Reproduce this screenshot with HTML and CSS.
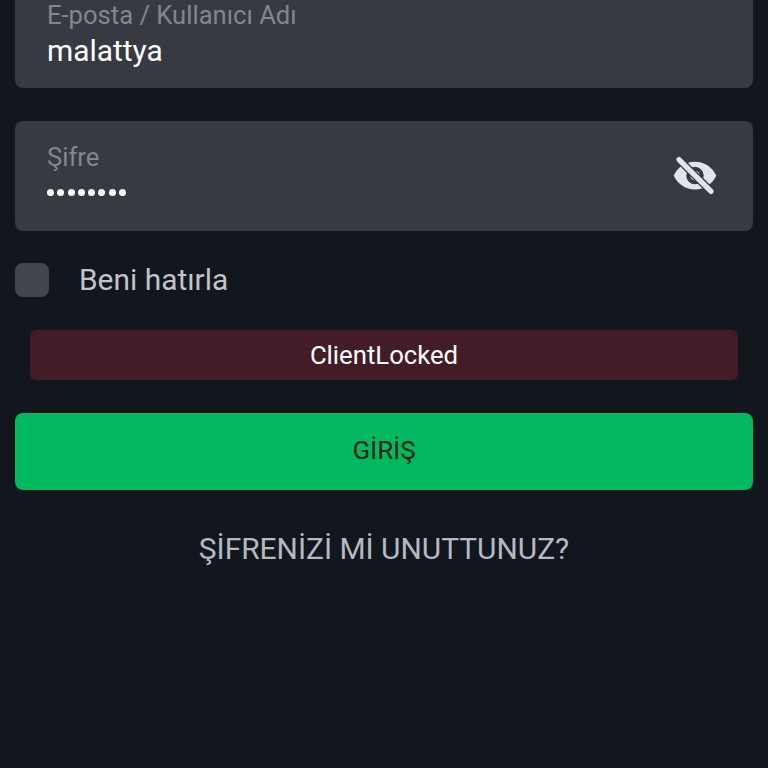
FILE: index.html
```html
<!DOCTYPE html>
<html lang="tr">
<head>
  <meta charset="UTF-8">
  <meta name="viewport" content="width=device-width, initial-scale=1.0">
  <title>Giriş</title>
  <link rel="stylesheet" href="styles.css">
</head>
<body>

<main class="login">
  <!-- Username field, scrolled partly out of view -->
  <div class="field field-user">
    <div class="field-text">
      <label class="field-label">E-posta / Kullanıcı Adı</label>
      <div class="field-value">malattya</div>
    </div>
  </div>

  <div class="field field-pass">
    <div class="field-text">
      <label class="field-label">Şifre</label>
      <div class="field-dots">
        <span></span><span></span><span></span><span></span><span></span><span></span><span></span><span></span>
      </div>
    </div>
    <svg class="eye" viewBox="0 0 24 24" width="50" height="50">
      <path fill="#e1e4e8" fill-rule="evenodd" d="M12 5.100c-4.600 0-8.500 2.700-10.200 6.700 1.700 4 5.600 6.700 10.200 6.700s8.500-2.700 10.200-6.700C20.500 7.800 16.600 5.100 12 5.100zm0 2.500a4.200 4.200 0 1 1 0 8.400 4.200 4.200 0 0 1 0-8.400z"/>
      <circle cx="12" cy="11.800" r="2.300" fill="#e1e4e8"/>
      <path stroke="#373a41" stroke-width="3.800" d="M4.300 4.100 19.700 19.400"/>
      <path stroke="#e1e4e8" stroke-width="2.500" stroke-linecap="round" d="M4.300 4.100 19.700 19.400"/>
    </svg>
  </div>

  <div class="remember">
    <span class="checkbox"></span>
    <span class="remember-text">Beni hatırla</span>
  </div>

  <div class="error">ClientLocked</div>

  <button class="submit">GİRİŞ</button>

  <a class="forgot">ŞİFRENİZİ Mİ UNUTTUNUZ?</a>
</main>

</body>
</html>
```

FILE: styles.css
```css
body {
  margin: 0;
  padding: 0;
  height: 768px;
  overflow: hidden;
  background: #12161d;
  font-family: 'Roboto', sans-serif;
}

.login {
  display: flex;
  flex-direction: column;
  padding: 0 15px;
}

.field {
  display: flex;
  align-items: center;
  justify-content: space-between;
  background: #373a41;
  border-radius: 8px;
  padding: 0 32px;
}

.field-user {
  height: 88px;
  border-radius: 0 0 8px 8px;
  align-items: flex-start;
}

.field-pass {
  height: 110px;
  margin-top: 33px;
  padding-right: 33px;
}

.field-pass .field-text {
  align-self: flex-start;
  padding-top: 21px;
}

.field-label {
  display: block;
  font-size: 25.6px;
  line-height: 30px;
  color: #83868b;
}

.field-value {
  font-size: 29.9px;
  line-height: 41px;
  color: #fff;
}

.field-dots {
  display: flex;
  gap: 3.3px;
  margin-top: 17px;
}

.field-dots span {
  width: 7px;
  height: 7px;
  border-radius: 50%;
  background: #fff;
}

.eye {
  display: block;
}

.remember {
  display: flex;
  align-items: center;
  gap: 30px;
  margin-top: 32px;
}

.checkbox {
  width: 34px;
  height: 34px;
  border-radius: 8px;
  background: #41454d;
}

.remember-text {
  font-size: 29.9px;
  line-height: 34px;
  color: #c1c4c9;
}

.error {
  margin: 33px 15px 0;
  height: 50px;
  line-height: 50px;
  border-radius: 6px;
  background: #431c28;
  color: #fff;
  font-size: 25.7px;
  text-align: center;
}

.submit {
  height: 77px;
  margin-top: 33px;
  padding: 0 0 3px;
  border: none;
  border-radius: 8px;
  background: #02b861;
  color: #0a2416;
  font-family: inherit;
  font-size: 25.9px;
}

.forgot {
  margin-top: 41px;
  color: #b6b9bf;
  font-size: 29.9px;
  text-align: center;
}
```
